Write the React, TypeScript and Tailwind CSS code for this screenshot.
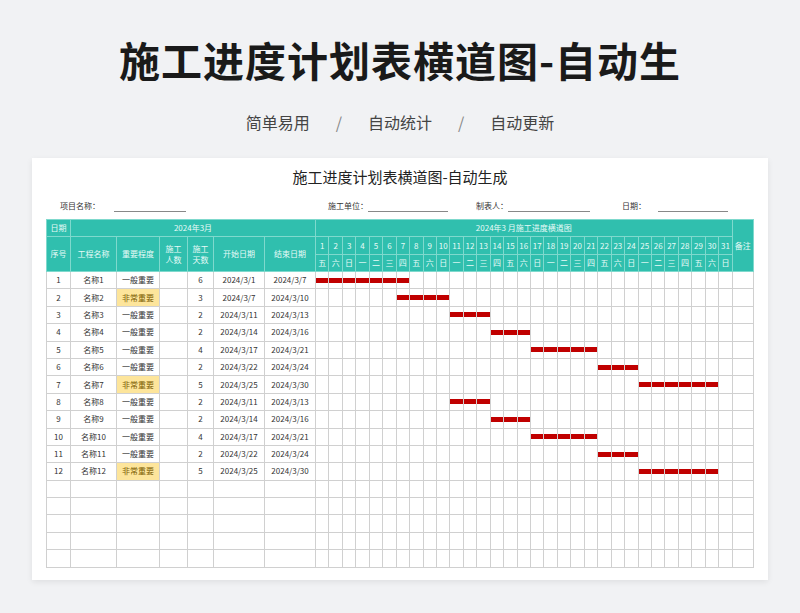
const wk = ['日', '一', '二', '三', '四', '五', '六'];
const days = Array.from({ length: 31 }, (_, i) => i + 1);

type Row = { n: number; name: string; lvl: string; cnt: number; s: number; e: number };
const rows: Row[] = [
  { n: 1, name: '名称1', lvl: '一般重要', cnt: 6, s: 1, e: 7 },
  { n: 2, name: '名称2', lvl: '非常重要', cnt: 3, s: 7, e: 10 },
  { n: 3, name: '名称3', lvl: '一般重要', cnt: 2, s: 11, e: 13 },
  { n: 4, name: '名称4', lvl: '一般重要', cnt: 2, s: 14, e: 16 },
  { n: 5, name: '名称5', lvl: '一般重要', cnt: 4, s: 17, e: 21 },
  { n: 6, name: '名称6', lvl: '一般重要', cnt: 2, s: 22, e: 24 },
  { n: 7, name: '名称7', lvl: '非常重要', cnt: 5, s: 25, e: 30 },
  { n: 8, name: '名称8', lvl: '一般重要', cnt: 2, s: 11, e: 13 },
  { n: 9, name: '名称9', lvl: '一般重要', cnt: 2, s: 14, e: 16 },
  { n: 10, name: '名称10', lvl: '一般重要', cnt: 4, s: 17, e: 21 },
  { n: 11, name: '名称11', lvl: '一般重要', cnt: 2, s: 22, e: 24 },
  { n: 12, name: '名称12', lvl: '非常重要', cnt: 5, s: 25, e: 30 },
];

const th = 'border border-[#7fd9cd] font-normal text-[#e8fbf8] p-0';
const td = 'border border-[#d0d0d0] p-0 h-[17.4px] text-center';

export default function App() {
  return (
    <div className="w-[800px] h-[613px] bg-[#f1f2f4] overflow-hidden flex flex-col items-center" style={{ fontFamily: '"Noto Sans CJK SC", sans-serif' }}>
      <h1 className="mt-[31px] text-[41px] leading-[56px] font-bold text-[#1a1a1a] tracking-[1px]">施工进度计划表横道图-自动生</h1>
      <div className="mt-[23px] flex items-center gap-[26px] text-[16px] text-[#444]">
        <span>简单易用</span><span className="text-[#888]">/</span><span>自动统计</span><span className="text-[#888]">/</span><span>自动更新</span>
      </div>
      <div className="mt-[24px] w-[736px] flex-1 bg-white mb-[33px] shadow-[0_2px_6px_rgba(0,0,0,0.08)] flex flex-col px-[14px] overflow-hidden">
        <div className="text-center text-[15px] text-[#222] mt-[8px] leading-[22px]">施工进度计划表横道图-自动生成</div>
        <div className="flex items-end text-[8px] text-[#333] mt-[10px] h-[14px]">
          <span className="ml-[14px]">项目名称：</span><span className="ml-[14px] w-[72px] border-b border-[#888]" />
          <span className="ml-[142px]">施工单位：</span><span className="w-[80px] border-b border-[#888]" />
          <span className="ml-[28px]">制表人：</span><span className="w-[82px] border-b border-[#888]" />
          <span className="ml-[32px]">日期：</span><span className="ml-[12px] w-[70px] border-b border-[#888]" />
        </div>
        <table className="mt-[7px] border-collapse table-fixed text-[8px] w-[707px]">
          <colgroup>
            <col className="w-[24px]" /><col className="w-[46px]" /><col className="w-[43px]" /><col className="w-[28px]" /><col className="w-[26px]" /><col className="w-[51px]" /><col className="w-[51px]" />
            {days.map(d => <col key={d} className="w-[13.45px]" />)}
            <col className="w-[21px]" />
          </colgroup>
          <thead className="bg-[#30bfae]">
            <tr className="h-[17px]">
              <th className={th}>日期</th>
              <th className={th} colSpan={6}>2024年3月</th>
              <th className={th} colSpan={31}>2024年3 月施工进度横道图</th>
              <th className={th} rowSpan={3}>备注</th>
            </tr>
            <tr className="h-[18px]">
              <th className={th} rowSpan={2}>序号</th>
              <th className={th} rowSpan={2}>工程名称</th>
              <th className={th} rowSpan={2}>重要程度</th>
              <th className={th + ' leading-[11px]'} rowSpan={2}>施工<br />人数</th>
              <th className={th + ' leading-[11px]'} rowSpan={2}>施工<br />天数</th>
              <th className={th} rowSpan={2}>开始日期</th>
              <th className={th} rowSpan={2}>结束日期</th>
              {days.map(d => <th key={d} className={th}>{d}</th>)}
            </tr>
            <tr className="h-[17px]">
              {days.map(d => <th key={d} className={th}>{wk[(d + 4) % 7]}</th>)}
            </tr>
          </thead>
          <tbody className="text-[#333]">
            {rows.map(r => (
              <tr key={r.n}>
                <td className={td}>{r.n}</td>
                <td className={td}>{r.name}</td>
                <td className={td + (r.lvl === '非常重要' ? ' bg-[#fde59b] text-[#7a5b00]' : '')}>{r.lvl}</td>
                <td className={td}></td>
                <td className={td}>{r.cnt}</td>
                <td className={td}>2024/3/{r.s}</td>
                <td className={td}>2024/3/{r.e}</td>
                {days.map(d => (
                  <td key={d} className={td}>
                    {d >= r.s && d <= r.e && <div className="h-[5px] bg-[#c00000]" />}
                  </td>
                ))}
                <td className={td}></td>
              </tr>
            ))}
            {Array.from({ length: 5 }, (_, i) => (
              <tr key={'e' + i}>
                {Array.from({ length: 39 }, (_, j) => <td key={j} className={td}></td>)}
              </tr>
            ))}
          </tbody>
        </table>
      </div>
    </div>
  );
}
